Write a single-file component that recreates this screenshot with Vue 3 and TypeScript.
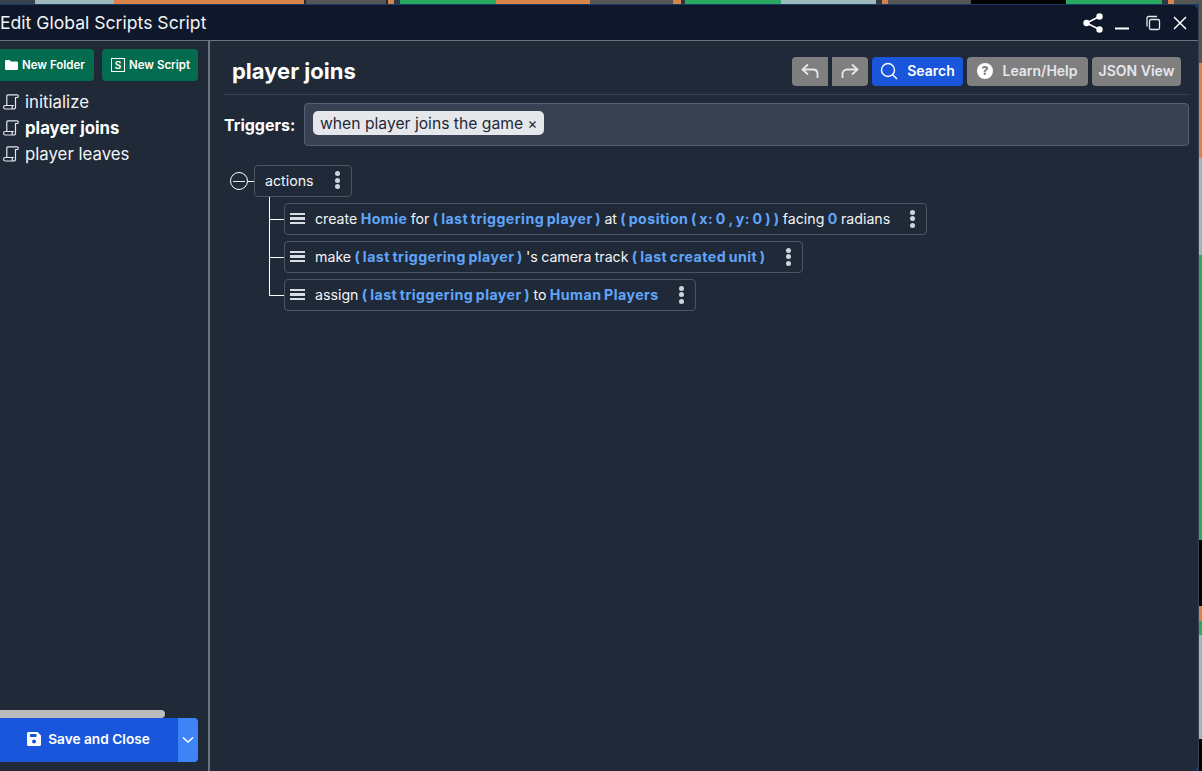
<script setup lang="ts">
const topTiles = [
  { w: 35, c: '#36424f' }, { w: 79, c: '#9db9bb' }, { w: 190, c: '#d8834a' }, { w: 2, c: '#1f2937' }, { w: 80, c: '#555555' },
  { w: 2, c: '#1f2937' }, { w: 6, c: '#d8834a' }, { w: 6, c: '#2b3744' }, { w: 96, c: '#29a862' }, { w: 94, c: '#d8834a' },
  { w: 83, c: '#555555' }, { w: 8, c: '#d8834a' }, { w: 4, c: '#2b3744' }, { w: 96, c: '#29a862' },
  { w: 95, c: '#9db9bb' }, { w: 6, c: '#2b3744' }, { w: 6, c: '#d8834a' }, { w: 83, c: '#555555' },
  { w: 95, c: '#000000' }, { w: 96, c: '#29a862' }, { w: 6, c: '#2b3744' }, { w: 6, c: '#d8834a' }, { w: 28, c: '#555555' },
]
const sideTiles = [
  { h: 63, c: '#555555' }, { h: 95, c: '#d8834a' }, { h: 97, c: '#9db9bb' }, { h: 285, c: '#29a862' },
  { h: 66, c: '#000000' }, { h: 15, c: '#d8834a' }, { h: 14, c: '#29a862' }, { h: 104, c: '#9db9bb' }, { h: 32, c: '#000000' },
]
const scripts = [
  { name: 'initialize', active: false },
  { name: 'player joins', active: true },
  { name: 'player leaves', active: false },
]
type Part = { t: string; v?: boolean }
const rows: { parts: Part[] }[] = [
  {
    parts: [
      { t: 'create ' }, { t: 'Homie', v: true }, { t: ' for ' }, { t: '( last triggering player )', v: true },
      { t: ' at ' }, { t: '( position ( x: 0 , y: 0 ) )', v: true }, { t: ' facing ' }, { t: '0', v: true }, { t: ' radians' },
    ],
  },
  {
    parts: [
      { t: 'make ' }, { t: '( last triggering player )', v: true }, { t: " 's camera track " }, { t: '( last created unit )', v: true },
    ],
  },
  {
    parts: [
      { t: 'assign ' }, { t: '( last triggering player )', v: true }, { t: ' to ' }, { t: 'Human Players', v: true },
    ],
  },
]
</script>

<template>
  <div class="desk">
    <div class="top-strip">
      <i v-for="(t, i) in topTiles" :key="i" :style="{ width: t.w + 'px', background: t.c }"></i>
    </div>
    <div class="side-strip">
      <i v-for="(t, i) in sideTiles" :key="i" :style="{ height: t.h + 'px', background: t.c }"></i>
    </div>

    <section class="win">
      <header class="titlebar">
        <h1>Edit Global Scripts Script</h1>
        <div class="winbtns">
          <svg class="w-share" width="22" height="22" viewBox="0 0 22 22"><g fill="#fff"><circle cx="17.5" cy="4.5" r="3.2"/><circle cx="17.5" cy="17.5" r="3.2"/><circle cx="4.5" cy="11" r="3.2"/></g><path d="M17.5 4.5 4.5 11l13 6.5" fill="none" stroke="#fff" stroke-width="1.6"/></svg>
          <svg class="w-min" width="16" height="16" viewBox="0 0 16 16"><path d="M1 13.5h14" stroke="#fff" stroke-width="2"/></svg>
          <svg class="w-max" width="16" height="16" viewBox="0 0 16 16" fill="none" stroke="#e5e7eb" stroke-width="1.3"><rect x="4.5" y="4.5" width="10" height="10" rx="1.5"/><path d="M2 11.5V3a1.5 1.5 0 0 1 1.5-1.5H12"/></svg>
          <svg class="w-close" width="16" height="16" viewBox="0 0 16 16"><path d="M2 2l12 12M14 2 2 14" stroke="#fff" stroke-width="1.5"/></svg>
        </div>
      </header>

      <div class="body">
        <aside class="sidebar">
          <div class="side-actions">
            <button class="green first">
              <svg width="13" height="10" viewBox="0 0 13 10"><path d="M0 1.2A1.200 1.200 0 0 1 1.200 0h3.400l1.300 1.400h5.900A1.200 1.200 0 0 1 13 2.600v6.200A1.200 1.200 0 0 1 11.800 10H1.200A1.200 1.200 0 0 1 0 8.800z" fill="#fff"/></svg>
              New Folder
            </button>
            <button class="green">
              <span class="s-box">S</span>
              New Script
            </button>
          </div>
          <ul class="tree">
            <li v-for="s in scripts" :key="s.name" :class="{ on: s.active }">
              <svg width="16" height="16" viewBox="0 0 16 16" fill="none" stroke="#e5e7eb" stroke-width="1.2"><path d="M3.800 11.500V1.700A.9.9 0 0 1 4.700.8H14a1.300 1.300 0 0 1 1.300 1.400c0 .8-.6 1.300-1.300 1.300h-1.500v9.700c0 1-.8 1.800-2 1.800H2.300C1.200 15 .6 14.200.6 13.200c0-1 .6-1.700 1.500-1.700h7.800c-.5.400-.8 1-.8 1.700 0 .8.400 1.500 1 1.800"/></svg>
              <span>{{ s.name }}</span>
            </li>
          </ul>
          <div class="side-foot">
            <div class="hscroll"></div>
            <div class="save">
              <button class="save-main">
                <svg width="14" height="14" viewBox="0 0 14 14"><path fill-rule="evenodd" d="M1.500 0h9L14 3.500v9a1.500 1.500 0 0 1-1.500 1.500h-11A1.500 1.500 0 0 1 0 12.500v-11A1.500 1.500 0 0 1 1.500 0zM3 2v3h6.500V2zm4 5.500a2 2 0 1 0 0 4 2 2 0 0 0 0-4z" fill="#fff"/></svg>
                Save and Close
              </button>
              <button class="save-more">
                <svg width="12" height="8" viewBox="0 0 12 8"><path d="M1 1.500l5 4.500 5-4.500" fill="none" stroke="#fff" stroke-width="1.500"/></svg>
              </button>
            </div>
          </div>
        </aside>

        <main class="main">
          <div class="head">
            <h2>player joins</h2>
            <div class="tools">
              <div class="undo">
                <button class="gray sq">
                  <svg width="18" height="16" viewBox="0 0 18 16" fill="none" stroke="#e5e7eb" stroke-width="1.800"><path d="M7 1.500 1.500 6.500 7 11.500M1.500 6.500H12c2.800 0 4.500 2 4.500 4.500V15"/></svg>
                </button>
                <button class="gray sq">
                  <svg width="18" height="16" viewBox="0 0 18 16" fill="none" stroke="#e5e7eb" stroke-width="1.800"><path d="M11 1.500l5.500 5-5.500 5M16.500 6.500H6C3.200 6.500 1.500 8.500 1.500 11v4"/></svg>
                </button>
              </div>
              <button class="blue">
                <svg width="18" height="18" viewBox="0 0 18 18" fill="none" stroke="#fff" stroke-width="1.400"><circle cx="8" cy="8" r="6.500"/><path d="M12.700 12.700 17 17"/></svg>
                Search
              </button>
              <button class="gray help">
                <svg width="16" height="16" viewBox="0 0 16 16"><circle cx="8" cy="8" r="8" fill="#fff"/><text x="8" y="12" text-anchor="middle" class="q">?</text></svg>
                Learn/Help
              </button>
              <button class="gray json">JSON View</button>
            </div>
          </div>

          <div class="triggers">
            <label>Triggers:</label>
            <div class="trigger-input">
              <span class="chip">when player joins the game <b>×</b></span>
            </div>
          </div>

          <div class="tree-area">
            <div class="root-row">
              <span class="collapse"><em></em></span>
              <span class="dash"></span>
              <div class="node root">
                <span>actions</span>
                <span class="dots"><i></i><i></i><i></i></span>
              </div>
            </div>
            <div class="children">
              <div v-for="(r, i) in rows" :key="i" class="child">
                <span class="branch"></span>
                <div class="node">
                  <span class="burger"><i></i><i></i><i></i></span>
                  <span class="sentence"><template v-for="(p, j) in r.parts" :key="j"><span :class="{ val: p.v }">{{ p.t }}</span></template></span>
                  <span class="dots end"><i></i><i></i><i></i></span>
                </div>
              </div>
            </div>
          </div>
        </main>
      </div>
    </section>
  </div>
</template>

<style>
html, body { margin: 0; background: #1f2937; overflow: hidden; }
</style>

<style scoped>
* { box-sizing: border-box; }
.desk { position: relative; width: 1202px; height: 771px; overflow: hidden; background: #1e3a5f; font-family: Inter, "Liberation Sans", sans-serif; color: #fff; }
.top-strip { display: flex; height: 4px; }
.top-strip i { display: block; flex: none; }
.side-strip { position: absolute; right: 0; top: 0; width: 3px; display: flex; flex-direction: column; }
.side-strip i { display: block; flex: none; }
.win { position: absolute; left: -1px; top: 5px; width: 1200px; height: 766px; background: #1f2937; border-right: 1px solid #374151; border-radius: 0 7px 7px 0; overflow: hidden; display: flex; flex-direction: column; }
.titlebar { flex: none; height: 36px; background: #0f172a; border-bottom: 1px solid #6b7280; display: flex; align-items: center; justify-content: space-between; padding: 0 10px 0 1px; }
h1 { margin: 0; font-size: 17.600px; font-weight: 400; color: #f3f4f6; }
.winbtns { display: flex; align-items: center; }
.w-min { margin-left: 10px; }
.w-max { margin-left: 15px; }
.w-close { margin-left: 11px; }
.body { flex: 1; display: flex; min-height: 0; }
.sidebar { flex: none; width: 211px; border-right: 2px solid #6b7280; display: flex; flex-direction: column; }
.side-actions { display: flex; gap: 8px; padding-top: 8px; }
button { border: none; font-family: inherit; color: #fff; display: flex; align-items: center; cursor: pointer; padding: 0; }
.green { height: 32px; background: #046c4e; border-radius: 4px; font-size: 11.500px; font-weight: 600; gap: 4px; padding: 0 6px 0 9px; white-space: nowrap; }
.green.first { width: 95px; padding-left: 6px; border-radius: 0 4px 4px 0; }
.green:not(.first) { width: 96px; }
.s-box { width: 14px; height: 14px; border: 1px solid #fff; font-size: 10px; display: flex; align-items: center; justify-content: center; }
.tree { list-style: none; margin: 0; padding: 8px 0 0 4px; }
.tree li { height: 26px; display: flex; align-items: center; gap: 6px; font-size: 16.800px; color: #f3f4f6; }
.tree li.on { font-weight: 700; color: #fff; }
.side-foot { margin-top: auto; padding-bottom: 9px; }
.hscroll { width: 166px; height: 8px; background: #bcbcbc; border-radius: 0 4px 4px 0; }
.save { display: flex; width: 199px; height: 44px; }
.save-main { flex: 1; background: #1a56db; justify-content: center; gap: 7px; font-size: 13.700px; font-weight: 600; padding-bottom: 2px; }
.save-more { width: 20px; background: #3f83f8; border-radius: 0 4px 4px 0; justify-content: center; }
.main { flex: 1; min-width: 0; padding: 0 9px 0 14px; }
.head { height: 54px; display: flex; align-items: center; justify-content: space-between; border-bottom: 1px solid #374151; padding: 7px 8px 0 8px; }
h2 { margin: 0; font-size: 22px; font-weight: 700; }
.tools { display: flex; gap: 4px; }
.undo { display: flex; }
.tools button { height: 29px; border-radius: 4px; font-size: 14px; font-weight: 600; justify-content: center; padding-bottom: 1px; }
.gray { background: #7f7f7f; color: #e5e7eb; }
.sq { width: 36px; }
.undo .sq:first-child { border-radius: 4px 0 0 4px; margin-right: 4px; }
.undo .sq:last-child { border-radius: 0 4px 4px 0; }
.blue { background: #1a56db; width: 91px; gap: 9px; }
.help { width: 121px; gap: 9px; }
.json { width: 89px; }
.q { font-size: 12px; font-weight: 800; fill: #7f7f7f; font-family: Inter, sans-serif; }
.triggers { display: flex; align-items: center; gap: 8px; margin-top: 8px; }
label { flex: none; width: 72px; font-size: 16px; font-weight: 700; white-space: nowrap; }
.trigger-input { flex: 1; height: 43px; background: #374151; border: 1px solid #566072; border-radius: 4px; display: flex; align-items: center; padding: 0 0 3px 8px; }
.chip { height: 24px; display: flex; align-items: center; background: #e5e7eb; color: #1f2937; border-radius: 5px; font-size: 15.700px; padding: 0 7px 0 7px; white-space: pre; }
.chip b { font-weight: 400; font-size: 15px; margin-left: 0; margin-right: -1px; }
.tree-area { padding: 19px 0 0 6px; }
.root-row { display: flex; align-items: center; }
.collapse { width: 18px; height: 18px; border: 1px solid #fff; border-radius: 50%; display: flex; align-items: center; justify-content: center; }
.collapse em { width: 12px; height: 1px; background: #e5e7eb; }
.dash { width: 6px; height: 1px; background: #fff; }
.node { display: inline-flex; align-items: center; height: 32px; padding-bottom: 1px; background: #1f2937; border: 1px solid #4b5563; border-radius: 4px; font-size: 14.200px; color: #f3f4f6; white-space: pre; }
.node.root { padding: 0 11px 2px 10px; width: 98px; justify-content: space-between; }
.children { margin-left: 39px; border-left: 1px solid #fff; height: 99px; display: flex; flex-direction: column; gap: 6px; padding-top: 6px; }
.child { display: flex; align-items: center; flex: none; }
.branch { width: 14px; height: 1px; background: #fff; }
.burger { width: 15px; margin: 0 10px 0 5px; display: flex; flex-direction: column; gap: 2px; }
.burger i { display: block; height: 2.500px; background: #d9dce1; }
.sentence { word-spacing: -0.7px; }
.val { color: #60a5fa; font-weight: 700; letter-spacing: 0.45px; word-spacing: -1.2px; }
.dots { display: flex; flex-direction: column; gap: 1.500px; }
.dots.end { margin-left: 20px; padding-right: 11px; }
.dots i { display: block; width: 5px; height: 5px; border-radius: 50%; background: #d1d5db; }
</style>
